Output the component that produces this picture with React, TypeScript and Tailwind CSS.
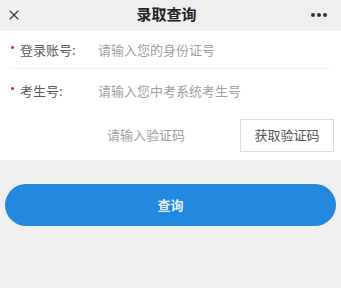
import { X } from 'lucide-react';

const font = { fontFamily: '"Noto Sans CJK SC", "Noto Sans", sans-serif' };

function Field({ label, placeholder, h, border }: { label: string; placeholder: string; h: string; border?: boolean }) {
  return (
    <div className={`mx-[10px] flex items-center ${h} ${border ? 'border-b border-[#f3f3f3]' : ''}`}>
      <span className="mb-[5px] ml-[1px] mr-[6px] h-[3px] w-[3px] rounded-full bg-[#e02020]" />
      <span className="w-[78px] text-[13px] text-[#5a5a5a]">{label}</span>
      <span className="text-[13px] text-[#a0a0a0]">{placeholder}</span>
    </div>
  );
}

export default function App() {
  return (
    <div className="h-[288px] w-[341px] bg-[#efefef]" style={font}>
      {/* Top bar */}
      <div className="flex h-[31px] items-center justify-between px-[6px] pb-[2px]">
        <X className="h-[16px] w-[16px] text-[#333]" strokeWidth={1.6} />
        <div className="text-[15px] font-bold text-[#222]">录取查询</div>
        <div className="flex w-[24px] gap-[2px] pr-[8px]">
          <span className="h-[4px] w-[4px] rounded-full bg-[#333]" />
          <span className="h-[4px] w-[4px] rounded-full bg-[#333]" />
          <span className="h-[4px] w-[4px] rounded-full bg-[#333]" />
        </div>
      </div>

      {/* Form */}
      <div className="bg-white pb-[3px]">
        <Field label="登录账号:" placeholder="请输入您的身份证号" h="h-[38px]" border />
        <Field label="考生号:" placeholder="请输入您中考系统考生号" h="h-[44px]" />
        <div className="flex h-[44px] items-center justify-between pr-[7px]">
          <span className="pl-[107px] text-[13px] text-[#a0a0a0]">请输入验证码</span>
          <div className="flex h-[33px] w-[94px] items-center justify-center border border-[#ddd] text-[13px] text-[#555]">
            获取验证码
          </div>
        </div>
      </div>

      {/* Submit */}
      <div className="px-[5px] pt-[24px]">
        <button className="flex h-[42px] w-full items-center justify-center rounded-full bg-[#2388e0] text-[13px] font-bold text-[#e6f0fa]">
          查询
        </button>
      </div>
    </div>
  );
}
